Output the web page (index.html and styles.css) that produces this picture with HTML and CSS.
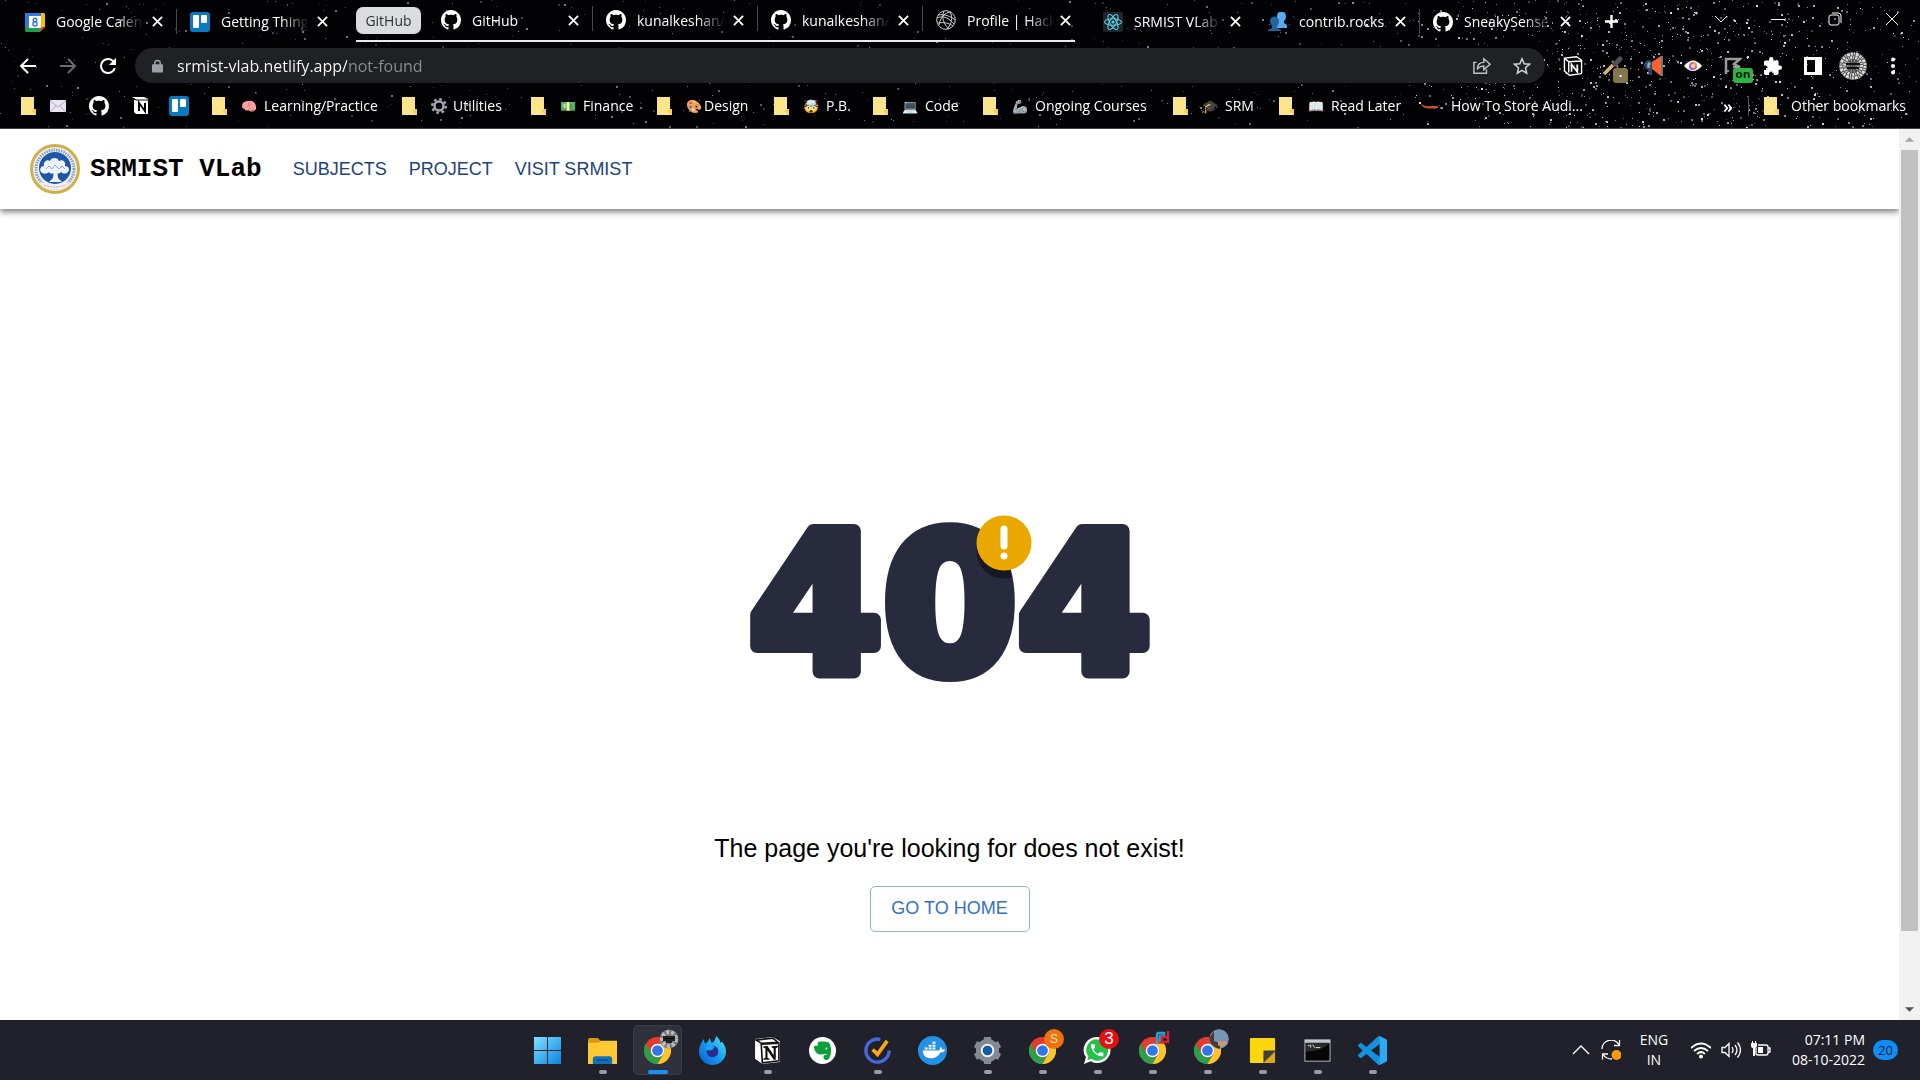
FILE: index.html
```html
<!DOCTYPE html>
<html lang="en">
<head>
<meta charset="utf-8">
<title>SRMIST VLab</title>
<link rel="stylesheet" href="styles.css">
</head>
<body>
<svg class="sprite" aria-hidden="true">
  <symbol id="github" viewBox="0 0 16 16"><path fill="#fff" d="M8 0C3.58 0 0 3.58 0 8c0 3.54 2.29 6.53 5.47 7.59.4.07.55-.17.55-.38 0-.19-.01-.82-.01-1.49-2.01.37-2.53-.49-2.69-.94-.09-.23-.48-.94-.82-1.13-.28-.15-.68-.52-.01-.53.63-.01 1.08.58 1.23.82.72 1.21 1.87.87 2.33.66.07-.52.28-.87.51-1.07-1.78-.2-3.64-.89-3.64-3.95 0-.87.31-1.59.82-2.15-.08-.2-.36-1.02.08-2.12 0 0 .67-.21 2.2.82.64-.18 1.32-.27 2-.27s1.36.09 2 .27c1.53-1.04 2.2-.82 2.2-.82.44 1.1.16 1.92.08 2.12.51.56.82 1.27.82 2.15 0 3.07-1.87 3.75-3.65 3.95.29.25.54.73.54 1.48 0 1.07-.01 1.93-.01 2.2 0 .21.15.46.55.38A8.01 8.01 0 0 0 16 8c0-4.42-3.58-8-8-8z"/></symbol>
  <symbol id="trello" viewBox="0 0 20 20"><rect width="20" height="20" rx="3" fill="#0b79c0"/><rect x="3" y="3" width="6" height="13" rx="1" fill="#fff"/><rect x="11" y="3" width="6" height="8" rx="1" fill="#fff"/></symbol>
  <symbol id="cross" viewBox="0 0 12 12"><path d="M1 1l10 10M11 1L1 11" stroke="#fff" stroke-width="2"/></symbol>
  <symbol id="folder" viewBox="0 0 16 18"><path d="M1 0h13v12h2v6H1z" fill="#fde58c"/><path d="M14 12c-1 0-2 1-2 2s1 2 2 2l2 2v-6z" fill="#f5cf59"/></symbol>
  <symbol id="notion" viewBox="0 0 28 28"><path d="M2 3l17-2 7 4v20l-17 2-7-5z" fill="#fff"/><path d="M3 4l16-2 5 4-16 1zM8 8l17-1v17L9 26z" fill="none" stroke="#15161a" stroke-width="1.6"/><path d="M10 23v-1l2-1V12l-2-1v-1l4-.3 6 9V12l-2-1v-1l6-.5v1L22 12v11h-2l-6-9v7l2 1v1z" fill="#111"/></symbol>
  <symbol id="chrome" viewBox="0 0 48 48"><circle cx="24" cy="24" r="24" fill="#e33b2e"/><path d="M3.2 12L13.6 30A12 12 0 0 0 34.4 30L24 48A24 24 0 0 1 3.2 12z" fill="#2c9f4b"/><path d="M44.8 12A24 24 0 0 1 24 48L34.4 30A12 12 0 0 0 24 12z" fill="#fcc42d"/><circle cx="24" cy="24" r="12" fill="#fff"/><circle cx="24" cy="24" r="9.5" fill="#2f76ea"/></symbol>
</svg>

<header class="browser">
  <canvas class="stars" id="stars"></canvas>

  <div class="tabs">
    <div class="tab"><svg class="fav" viewBox="0 0 20 20"><path d="M0 1h16v4H5v10H0z" fill="#2f7ae5"/><path d="M16 1h3l1 1v13h-4z" fill="#fbbc04"/><path d="M0 15h15v5H1l-1-1z" fill="#1e9e4a"/><path d="M15 15h5l-5 5z" fill="#ea4335"/><rect x="4" y="4" width="12" height="12" fill="#fff"/><circle cx="10" cy="8" r="1.8" fill="none" stroke="#2f6fd8" stroke-width="1.4"/><circle cx="10" cy="12" r="2.1" fill="none" stroke="#2f6fd8" stroke-width="1.4"/></svg><span class="label">Google Calen</span><button class="close" aria-label="Close tab"><svg><use href="#cross"/></svg></button></div>
    <div class="tab sep"><svg class="fav"><use href="#trello"/></svg><span class="label">Getting Thing</span><button class="close" aria-label="Close tab"><svg><use href="#cross"/></svg></button></div>
    <div class="group">
      <button class="chip">GitHub</button>
      <div class="tab"><svg class="fav"><use href="#github"/></svg><span class="label plain">GitHub</span><button class="close" aria-label="Close tab"><svg><use href="#cross"/></svg></button></div>
      <div class="tab sep"><svg class="fav"><use href="#github"/></svg><span class="label">kunalkeshan/</span><button class="close" aria-label="Close tab"><svg><use href="#cross"/></svg></button></div>
      <div class="tab sep"><svg class="fav"><use href="#github"/></svg><span class="label">kunalkeshan/</span><button class="close" aria-label="Close tab"><svg><use href="#cross"/></svg></button></div>
      <div class="tab sep"><svg class="fav" viewBox="0 0 20 20" fill="none" stroke="#ccc" stroke-width="1"><circle cx="10" cy="10" r="9.3"/><path d="M1 8c6-3 12 0 17 6M3 15C4 8 9 2 15 2M8 1c-3 6 0 14 5 18M14 2c3 5 2 12-3 17M2 5c6-1 13 1 17 5M2 13c6-1 11 0 15 3"/></svg><span class="label">Profile | Hack</span><button class="close" aria-label="Close tab"><svg><use href="#cross"/></svg></button></div>
    </div>
    <div class="tab"><svg class="fav" viewBox="0 0 20 20"><rect width="20" height="20" rx="2" fill="#20262c"/><g fill="none" stroke="#61cfe6" stroke-width="1.1"><ellipse cx="10" cy="10" rx="8.5" ry="3.3"/><ellipse cx="10" cy="10" rx="8.5" ry="3.3" transform="rotate(60 10 10)"/><ellipse cx="10" cy="10" rx="8.5" ry="3.3" transform="rotate(120 10 10)"/></g><circle cx="10" cy="10" r="1.6" fill="#61cfe6"/></svg><span class="label">SRMIST VLab</span><button class="close" aria-label="Close tab"><svg><use href="#cross"/></svg></button></div>
    <div class="tab"><svg class="fav" viewBox="0 0 20 20"><path d="M9 4a4.500 4.500 0 0 1 9 0c0 3-1 4-2 5v2l3 2v3H9z" fill="#55acee"/><path d="M2 9a4.500 4.500 0 0 1 9 0c0 3-1 4-2 5v2l4 2v1H0v-1l4-2v-2C3 13 2 11 2 9z" fill="#226699"/></svg><span class="label plain">contrib.rocks</span><button class="close" aria-label="Close tab"><svg><use href="#cross"/></svg></button></div>
    <div class="tab sep"><svg class="fav"><use href="#github"/></svg><span class="label">SneakySense</span><button class="close" aria-label="Close tab"><svg><use href="#cross"/></svg></button></div>
    <button class="new-tab" aria-label="New tab"><svg viewBox="0 0 16 16"><path d="M8 1v14M1 8h14" stroke="#fff" stroke-width="2.500"/></svg></button>
    <div class="window-controls">
      <button aria-label="Search tabs"><svg viewBox="0 0 14 14"><path d="M1 4l6 6 6-6"/></svg></button>
      <button aria-label="Minimise"><svg viewBox="0 0 14 14"><path d="M0 7.500h14"/></svg></button>
      <button aria-label="Restore"><svg viewBox="0 0 14 14"><rect x="1" y="3" width="10" height="10" rx="2"/><path d="M4 1h6a3 3 0 0 1 3 3v7"/></svg></button>
      <button aria-label="Close"><svg viewBox="0 0 14 14"><path d="M1 1l12 12M13 1L1 13"/></svg></button>
    </div>
  </div>

  <div class="toolbar">
    <button aria-label="Back"><svg viewBox="0 0 18 18" fill="none" stroke="#fff" stroke-width="2"><path d="M17 9H2M9 2L2 9l7 7"/></svg></button>
    <button aria-label="Forward"><svg viewBox="0 0 18 18" fill="none" stroke="#6b6b6d" stroke-width="2"><path d="M1 9h15M9 2l7 7-7 7"/></svg></button>
    <button aria-label="Reload"><svg class="large" viewBox="2 2 20 20"><path fill="#fff" d="M17.650 6.350A7.960 7.960 0 0 0 12 4a8 8 0 1 0 7.730 10h-2.080A6 6 0 1 1 12 6c1.660 0 3.140.69 4.220 1.780L13 11h7V4l-2.350 2.350z"/></svg></button>
    <div class="omnibox">
      <svg class="lock" viewBox="0 0 12 14"><rect y="5" width="12" height="9" rx="1" fill="#9aa0a6"/><path d="M3 6V4a3 3 0 0 1 6 0v2" fill="none" stroke="#9aa0a6" stroke-width="1.600"/></svg>
      <input class="url" type="text" aria-label="Address" value="srmist-vlab.netlify.app/not-found">
      <button aria-label="Share"><svg viewBox="0 0 20 18" fill="none" stroke="#bdc1c6" stroke-width="1.600"><path d="M4 5H1v12h14v-4M5 12c0-5 3-7 7-7V1l7 6-7 6V9c-3 0-5 1-7 3z"/></svg></button>
      <button aria-label="Bookmark"><svg viewBox="0 0 20 20" fill="none" stroke="#d0d3d6" stroke-width="1.700"><path d="M10 2l2.400 5.500 6 .5-4.500 4 1.300 6-5.200-3.200L4.800 18l1.300-6-4.500-4 6-.5z"/></svg></button>
    </div>
    <button aria-label="Notion clipper"><svg class="large" viewBox="0 0 28 28" fill="none" stroke="#fff" stroke-width="2"><path d="M2 3l17-2 7 5v17q0 2-2 2L9 27l-7-6zM2 3l6 5v15M8 8l17-1"/><path d="M12 22V12l8 10V12" stroke-width="2.500"/></svg></button>
    <button aria-label="Colour picker"><svg class="large" viewBox="0 0 20 20"><path d="M1 18l9-9" stroke="#d9b27b" stroke-width="3.500"/><path d="M9 5l6 6" stroke="#888" stroke-width="2"/><path d="M12 8l5-5" stroke="#505050" stroke-width="5" stroke-linecap="round"/></svg><span class="badge brown">.</span></button>
    <button aria-label="Announcer"><svg class="large" viewBox="0 0 20 20"><circle cx="6" cy="9" r="5" fill="#29455f"/><path d="M4 10h5v9H6z" fill="#29455f"/><path d="M9 6l9-6v20l-9-7z" fill="#fa6232"/><path d="M19 0v20" stroke="#dfe9ef"/><path d="M5 12V7h2v2H5l2 3" fill="none" stroke="#b0cce0"/></svg></button>
    <button aria-label="Eye"><svg viewBox="0 0 18 18"><path d="M0 9q9-11 18 0-9 10-18 0z" fill="#fff"/><circle cx="9" cy="9" r="4" fill="#e0609a"/><path d="M9 5a4 4 0 0 1 4 4H9z" fill="#f6a02d"/><path d="M9 13a4 4 0 0 1-4-4h4z" fill="#7f63d6"/><circle cx="9" cy="9" r="2" fill="#f7d8a4"/></svg></button>
    <button aria-label="Flag"><svg viewBox="0 0 18 18" fill="none" stroke="#9b9b9b" stroke-width="2.500"><path d="M2 17V2h14l-6 5 6 3H9"/></svg><span class="badge green">on</span></button>
    <button aria-label="Extensions"><svg viewBox="2 1 21 21"><path fill="#fff" d="M20.500 11H19V7c0-1.100-.9-2-2-2h-4V3.500a2.500 2.500 0 0 0-5 0V5H4c-1.100 0-2 .9-2 2v3.800h1.500c1.500 0 2.700 1.200 2.700 2.700S5 16.200 3.500 16.200H2V20c0 1.100.9 2 2 2h3.800v-1.500c0-1.500 1.200-2.700 2.700-2.700s2.700 1.200 2.700 2.700V22H17c1.100 0 2-.9 2-2v-4h1.500a2.500 2.500 0 0 0 0-5z"/></svg></button>
    <button aria-label="Side panel"><svg viewBox="0 0 18 18"><path fill="#fff" fill-rule="evenodd" d="M0 0h18v18H0zM3 3v12h8V3z"/></svg></button>
    <button aria-label="Profile"><svg class="avatar" viewBox="0 0 28 28"><circle cx="14" cy="14" r="14" fill="#4a4a4a"/><g fill="none" stroke="#dcdcdc"><circle cx="14" cy="14" r="12" stroke-width="3" stroke-dasharray="2 1 1 1 3 1"/><circle cx="14" cy="14" r="8.500" stroke-width="3" stroke-dasharray="1 1 2 1"/><circle cx="14" cy="14" r="5" stroke-width="3" stroke-dasharray="1 2" stroke="#999"/></g><path d="M7 12h14M8 16h12" stroke="#111" stroke-width="2"/><path d="M6 14h16" stroke="#999" stroke-dasharray="1 1"/></svg></button>
    <button class="more" aria-label="Menu"><svg viewBox="0 0 18 18" fill="#fff"><circle cx="9" cy="2.500" r="2"/><circle cx="9" cy="9" r="2"/><circle cx="9" cy="15.500" r="2"/></svg></button>
  </div>

  <nav class="bookmarks" aria-label="Bookmarks">
    <a href="#"><svg class="folder"><use href="#folder"/></svg><svg class="mail" viewBox="0 0 16 12"><rect width="16" height="12" rx="1" fill="#e8e4f0"/><path d="M0 1l8 6 8-6M0 12l6-6M16 12l-6-6" fill="none" stroke="#b4a8c8"/></svg></a>
    <a href="#" aria-label="GitHub"><svg class="fav"><use href="#github"/></svg></a>
    <a href="#" aria-label="Notion"><svg class="small" viewBox="0 0 17 19"><path d="M0 1h12l4 2v15H4l-2-2V4h3z" fill="#fff"/><path d="M0 2l4 2h12" fill="none" stroke="#111"/><path d="M7 15V7l6 8V7" fill="none" stroke="#000" stroke-width="2"/></svg></a>
    <a href="#" aria-label="Trello"><svg class="fav"><use href="#trello"/></svg></a>
    <a href="#"><svg class="folder"><use href="#folder"/></svg><span class="emoji">🧠</span><span>Learning/Practice</span></a>
    <a href="#"><svg class="folder"><use href="#folder"/></svg><svg class="gear" viewBox="0 0 16 16" fill="none" stroke="#a9a3b5"><circle cx="8" cy="8" r="4.500" stroke-width="2.500"/><circle cx="8" cy="8" r="6.800" stroke-width="2.400" stroke-dasharray="2.670 2.670"/></svg><span>Utilities</span></a>
    <a href="#"><svg class="folder"><use href="#folder"/></svg><span class="emoji">💵</span><span>Finance</span></a>
    <a href="#" class="tight"><svg class="folder"><use href="#folder"/></svg><span class="emoji">🎨</span><span>Design</span></a>
    <a href="#"><svg class="folder"><use href="#folder"/></svg><span class="emoji">🤯</span><span>P.B.</span></a>
    <a href="#"><svg class="folder"><use href="#folder"/></svg><span class="emoji">💻</span><span>Code</span></a>
    <a href="#"><svg class="folder"><use href="#folder"/></svg><span class="emoji">🦾</span><span>Ongoing Courses</span></a>
    <a href="#"><svg class="folder"><use href="#folder"/></svg><span class="emoji">🎓</span><span>SRM</span></a>
    <a href="#"><svg class="folder"><use href="#folder"/></svg><span class="emoji">📖</span><span>Read Later</span></a>
    <a href="#" class="article"><svg viewBox="0 0 18 6"><path d="M0 1q5 3 9 2h8v2q-8 1-12 0Q1 4 0 1z" fill="#c6502a"/></svg><span>How To Store Audi...</span></a>
    <button class="overflow" aria-label="More bookmarks">»</button>
    <a href="#" class="other"><svg class="folder"><use href="#folder"/></svg><span>Other bookmarks</span></a>
  </nav>
</header>

<div class="viewport">
  <div class="page">
    <nav class="site-nav" aria-label="Site">
      <a class="brand" href="#">
        <svg viewBox="0 0 50 50"><circle cx="25" cy="25" r="23.500" fill="#eef1f6" stroke="#cfb048" stroke-width="3"/><circle cx="25" cy="25" r="19" fill="none" stroke="#8e9fc4" stroke-width="3" stroke-dasharray="1.500 1"/><circle cx="25" cy="24" r="16" fill="#1c56a8"/><path d="M24 24h3l1 10 4 4H19l4-4z" fill="#eef3fa"/><path d="M11 28c-2-3 0-6 3-6-1-4 3-7 6-5 1-4 8-4 9 0 4-2 7 1 6 5 4 0 5 4 3 6-3 3-6 1-7 0-2 2-5 2-6 0-2 2-5 2-6 0-2 2-6 2-8 0z" fill="#eef3fa"/><path d="M16 25l3-3 3 3 3-4 4 4 3-3 3 3" fill="none" stroke="#8aa9d6"/><path d="M10 38q15 4 30 0l-4 5q-11 5-22 0z" fill="#eef1f6"/><path d="M14 41q11 4 22 0" fill="none" stroke="#d9a0a8" stroke-dasharray="2 1"/></svg>
        <span>SRMIST VLab</span>
      </a>
      <ul class="links">
        <li><a href="#">SUBJECTS</a></li>
        <li><a href="#">PROJECT</a></li>
        <li><a href="#">VISIT SRMIST</a></li>
      </ul>
    </nav>
    <main class="not-found">
      <svg class="code" viewBox="0 0 420 176">
        <clipPath id="zero"><ellipse cx="210" cy="88" rx="65" ry="80"/></clipPath>
        <text class="digits" x="210" y="158">404</text>
        <circle cx="264" cy="37" r="27.500" fill="#161824" clip-path="url(#zero)"/>
        <circle cx="264" cy="29" r="27.500" fill="#eaa800"/>
        <path d="M264 15v17" stroke="#fff" stroke-width="7" stroke-linecap="round"/>
        <circle cx="264" cy="42" r="3.500" fill="#fff"/>
      </svg>
      <h1>The page you're looking for does not exist!</h1>
      <button class="home">GO TO HOME</button>
    </main>
  </div>
  <div class="scrollbar">
    <svg viewBox="0 0 10 5"><path d="M0 5l5-5 5 5z" fill="#a3a3a3"/></svg>
    <div class="track"><div class="thumb"></div></div>
    <svg viewBox="0 0 10 5"><path d="M0 0l5 5 5-5z" fill="#505050"/></svg>
  </div>
</div>

<footer class="taskbar">
  <div class="apps">
    <button aria-label="Start"><svg viewBox="0 0 30 30"><defs><linearGradient id="win" x2="1" y2="1"><stop stop-color="#7fe0ff"/><stop offset="1" stop-color="#0a84e0"/></linearGradient></defs><path d="M1 1h13.500v13.500H1zM15.500 1H29v13.500H15.500zM1 15.500h13.500V29H1zM15.500 15.500H29V29H15.500z" fill="url(#win)"/></svg></button>
    <button class="open" aria-label="File Explorer"><svg viewBox="0 0 30 30"><path d="M0 4q0-2 2-2h8l3 3-2 4H0z" fill="#d9980f"/><path d="M0 7h11l2-2h17v24H0z" fill="#fcc934"/><path d="M5 29v-5q0-3 3-3h14q3 0 3 3v5z" fill="#1272b8"/><path d="M9 25h12" stroke="#0a4c82" stroke-width="1.500"/></svg></button>
    <button class="open active" aria-label="Chrome"><svg viewBox="0 0 30 30"><use href="#chrome" x="1" y="1" width="28" height="28"/></svg><svg class="mark" viewBox="0 0 20 20"><circle cx="10" cy="10" r="9.500" fill="#777"/><circle cx="10" cy="10" r="7" fill="none" stroke="#bbb" stroke-width="4" stroke-dasharray="3 2"/><path d="M5 8h10v3H5zM7 13h6" stroke="#222" stroke-width="2"/></svg></button>
    <button aria-label="Firefox"><svg viewBox="0 0 30 30"><defs><linearGradient id="fox" x1="1" x2="0" y2="1"><stop stop-color="#52e4f5"/><stop offset=".5" stop-color="#169bf0"/><stop offset="1" stop-color="#0757d2"/></linearGradient></defs><path d="M1 16C1 11 3 7 6 3l1 5 3-2 2-4 2 5c3 0 4-5 5-7 3 3 4 5 4 7l2-1c3 4 4 7 4 10a14 14 0 0 1-28 0z" fill="url(#fox)"/><circle cx="15" cy="16" r="6" fill="#2a2a8c"/><path d="M8 14q6 3 9-2-2-4-7-3z" fill="#1ca2ef"/></svg></button>
    <button class="open" aria-label="Notion"><svg><use href="#notion"/></svg></button>
    <button aria-label="Evernote"><svg viewBox="0 0 30 30"><circle cx="15" cy="15" r="14" fill="#fff"/><path d="M6 11l5-5c5-1 9 0 11 1 3 6 2 12 0 16-2 3-6 2-6-1s3-3 4-2c0 0-1-2-4-1-7 1-9-3-10-8zM7 10h3V7z" fill="#0ba037"/><circle cx="19" cy="13" r="1" fill="#fff"/></svg></button>
    <button class="open" aria-label="TickTick"><svg viewBox="0 0 30 30" fill="none"><path d="M18 3.500A12 12 0 1 0 27 15" stroke="#4767e0" stroke-width="3.500"/><path d="M10 14l5 5L25 5" stroke="#fba91a" stroke-width="3.800"/></svg></button>
    <button aria-label="Docker"><svg viewBox="0 0 30 30"><circle cx="15" cy="15" r="15" fill="#2391e6"/><path d="M5 15h17q1-4 2-4l1 3h3c-1 3-3 3-5 3-2 4-5 6-10 6-6 0-8-4-8-8zM7 12h3v2H7zM11 12h3v2h-3zM15 12h3v2h-3zM11 9h3v2h-3zM15 9h3v2h-3zM15 6h3v2h-3z" fill="#fff"/></svg></button>
    <button class="open" aria-label="Settings"><svg viewBox="0 0 30 30" fill="none"><circle cx="15" cy="15" r="8.500" stroke="#848a92" stroke-width="7"/><path d="M11.500 1h7l1 6h-9zM11.500 29h7l1-6h-9zM1 11.500l3-6 6 2-3 8zM29 11.500l-3-6-6 2 3 8zM1 18.500l3 6 6-2-3-8zM29 18.500l-3 6-6-2 3-8z" fill="#848a92"/><circle cx="15" cy="15" r="6" fill="#135ba5" stroke="#f2f5f8" stroke-width="2"/></svg></button>
    <button class="open" aria-label="Chrome, profile S"><svg viewBox="0 0 30 30"><use href="#chrome" x="1" y="1" width="28" height="28"/></svg><span class="mark orange">S</span></button>
    <button class="open" aria-label="WhatsApp"><svg viewBox="0 0 30 30"><path d="M15 1a13.500 13.500 0 0 1 0 27q-4 0-7-2l-7 3 2-7A13.500 13.500 0 0 1 15 1z" fill="#fff"/><path d="M15 3.500a11 11 0 0 1 0 22q-4 0-6.500-2L4.500 25l1-4A11 11 0 0 1 15 3.500z" fill="#27c04a"/><path transform="translate(6 6) scale(.72)" fill="#fff" d="M6.620 10.790c1.440 2.830 3.760 5.140 6.590 6.590l2.200-2.200c.27-.27.67-.36 1.020-.24 1.120.37 2.330.57 3.570.57.55 0 1 .45 1 1V20c0 .55-.45 1-1 1-9.390 0-17-7.610-17-17 0-.55.45-1 1-1h3.500c.55 0 1 .45 1 1 0 1.250.2 2.450.57 3.570.11.35.03.74-.25 1.020l-2.200 2.200z"/></svg><span class="mark red">3</span></button>
    <button class="open" aria-label="Chrome, profile rd"><svg viewBox="0 0 30 30"><use href="#chrome" x="1" y="1" width="28" height="28"/></svg><svg class="mark" viewBox="0 0 20 20" fill="none" stroke-width="2.500"><path d="M3 15V4h7v3H6v5" stroke="#2a9fd0"/><path d="M14 2v11H8V8h5" stroke="#cf2436"/></svg></button>
    <button class="open" aria-label="Chrome, profile photo"><svg viewBox="0 0 30 30"><use href="#chrome" x="1" y="1" width="28" height="28"/></svg><svg class="mark" viewBox="0 0 20 20"><circle cx="10" cy="10" r="10" fill="#7896b4"/><path d="M0 9l5-7v10l6 2v6Q1 18 0 9z" fill="#4a3c38"/><path d="M9 12h8l1 3-5 3-4-2z" fill="#c99a78"/></svg></button>
    <button class="open" aria-label="Sticky Notes"><svg viewBox="0 0 30 30"><path d="M2 3q0-1 1-1h24q1 0 1 1v13L16 28H3q-1 0-1-1z" fill="#fcd60c"/><path d="M16 15h12v1L16 28z" fill="#3e3e40"/><path d="M28 16v11q0 1-1 1H16z" fill="#e0a818"/></svg></button>
    <button class="open" aria-label="Terminal"><svg viewBox="0 0 30 30"><rect x="2" y="4" width="26" height="22" fill="#060606" stroke="#b9bcc0"/><path d="M2 4h26v3H2z" fill="#c5c8cc"/><path d="M5 10h2M8 9v3M10 9l2 3M13 12h5" stroke="#ddd"/><path d="M3 16q15 0 24-8v-1H3z" fill="#fff" opacity=".15"/></svg></button>
    <button class="open" aria-label="Visual Studio Code"><svg viewBox="0 0 24 24"><path fill="#1590dc" d="M23.150 2.587L18.210.21a1.494 1.494 0 0 0-1.705.29l-9.460 8.630-4.120-3.128a.999.999 0 0 0-1.276.057L.327 7.261A1 1 0 0 0 .326 8.740L3.899 12 .326 15.260a1 1 0 0 0 .001 1.479L1.650 17.940a.999.999 0 0 0 1.276.057l4.120-3.128 9.460 8.630a1.492 1.492 0 0 0 1.704.29l4.942-2.377A1.500 1.500 0 0 0 24 20.060V3.939a1.500 1.500 0 0 0-.85-1.352zm-5.146 14.861L10.826 12l7.178-5.448v10.896z"/><path fill="#2fa8f3" d="M18 .2l5.200 2.400q.8.500.8 1.300v16.200q0 .8-.8 1.300L18 23.800z"/></svg></button>
  </div>
  <div class="tray">
    <button aria-label="Hidden icons"><svg viewBox="0 0 20 20"><path d="M2 14l8-8 8 8"/></svg></button>
    <button aria-label="Updates"><svg viewBox="0 0 20 20"><path d="M1 9a9 9 0 0 1 17-4M18.500 0v5.500H13M11 19q-6 0-9-4.500M1.500 19.500V14H7"/><circle cx="15.500" cy="15" r="5" fill="#fb9a0c" stroke="none"/></svg></button>
    <button class="lang"><span>ENG</span><span>IN</span></button>
    <button aria-label="Network"><svg viewBox="0 0 20 20"><path d="M0 8q10-9 20 0M3 11q7-6 14 0M6 14q4-4 8 0" stroke-width="1.700"/><circle cx="10" cy="16.500" r="2" fill="#fff" stroke="none"/></svg></button>
    <button aria-label="Volume"><svg viewBox="0 0 20 20"><path d="M1 7.500h3l4-4v13l-4-4H1zM11 7q2 3 0 6M14 5q4 5 0 10M16.500 2.500q6 7.500 0 15"/></svg></button>
    <button aria-label="Battery"><svg viewBox="0 0 20 20"><path d="M7 5h8q2 0 2 2v6q0 2-2 2H7q-2 0-2-2V8M17 8h2v4h-2"/><path d="M7 7h5v6H7zM0 3h6v3q0 2-2 2v8H2V8Q0 8 0 6zM1 1h1v3H1zM4 1h1v3H4z" fill="#fff" stroke="none"/></svg></button>
    <button class="clock"><time>07:11 PM</time><time>08-10-2022</time></button>
    <span class="count">20</span>
  </div>
</footer>
<script src="stars.js"></script>
</body>
</html>
```
FILE: styles.css
```css
* { box-sizing: border-box; }

body {
  margin: 0;
  height: 100vh;
  display: flex;
  flex-direction: column;
  background: #fff;
  font-family: "Open Sans", sans-serif;
  font-size: 14px;
  overflow: hidden;
}

button {
  border: 0;
  padding: 0;
  background: none;
  color: inherit;
  font: inherit;
}

a { color: inherit; text-decoration: none; }
svg { display: block; flex: none; }
.sprite { position: absolute; width: 0; height: 0; }
.fav { width: 20px; height: 20px; }
.small { width: 17px; height: 19px; }

/* Browser frame */
.browser {
  position: relative;
  isolation: isolate;
  flex: none;
  background: #020205;
  color: #fff;
  border-bottom: 1px solid #444;
}
.stars {
  position: absolute;
  inset: 0;
  z-index: -1;
  width: 100%;
  height: 100%;
}

.tabs { display: flex; height: 43px; padding-left: 11px; }
.tab {
  display: flex;
  align-items: center;
  width: 165px;
  padding-left: 14px;
  flex: none;
  position: relative;
}
.sep::before {
  content: "";
  position: absolute;
  left: 0;
  top: 9px;
  width: 1px;
  height: 25px;
  background: #4a4a4d;
}
.group .sep::before { top: -4px; }
.label {
  flex: none;
  width: 88px;
  margin-left: 11px;
  white-space: nowrap;
  overflow: hidden;
  mask-image: linear-gradient(to right, #000 60px, transparent 88px);
}
.label.plain { mask-image: none; }
.close { width: 26px; height: 20px; display: grid; place-items: center; }
.close svg { width: 11px; height: 11px; }
.group {
  display: flex;
  align-items: center;
  margin-left: 15px;
  margin-right: 14px;
  border-bottom: 2px solid #e8eaed;
  height: 42px;
}
.group .tab:last-child { width: 153px; }
.chip {
  width: 65px;
  height: 27px;
  margin-right: 6px;
  border-radius: 7px;
  background: #dadce0;
  color: #303236;
}
.new-tab { width: 54px; display: grid; place-items: center; }
.new-tab svg { width: 15px; height: 15px; }
.window-controls { display: flex; margin-left: auto; height: 37px; }
.window-controls button { width: 57px; display: grid; place-items: center; }
.window-controls svg { width: 14px; height: 14px; fill: none; stroke: #fff; }

.toolbar { display: flex; align-items: center; height: 45px; padding: 0 7px 0 8px; }
.toolbar button {
  position: relative;
  width: 40px;
  height: 35px;
  display: grid;
  place-items: center;
}
.toolbar svg { width: 18px; height: 18px; }
.toolbar svg.large { width: 20px; height: 20px; }
.toolbar svg.avatar { width: 28px; height: 28px; }
.omnibox {
  flex: 1;
  display: flex;
  align-items: center;
  height: 35px;
  margin: 0 8px 0 7px;
  padding: 0 3px 0 17px;
  border-radius: 18px;
  background: #202124;
}
.toolbar .lock { width: 11px; height: 14px; }
.url {
  flex: 1;
  min-width: 0;
  margin: 0 0 0 14px;
  padding: 0;
  border: 0;
  outline: 0;
  font: 16px/24px "Open Sans", sans-serif;
  color: transparent;
  background: linear-gradient(to right, #fff 170px, #8b8e92 170px);
  background-clip: text;
}
.badge {
  position: absolute;
  left: 20px;
  bottom: 0;
  height: 15px;
  border-radius: 3px;
  font: bold 11px/14px "DejaVu Sans", sans-serif;
}
.brown { width: 15px; background: #85754f; line-height: 12px; }
.green { width: 20px; background: #2eb344; color: #10220f; }

.bookmarks {
  display: grid;
  grid-template-columns: 69px 43px 37px 42px 190px 129px 126px 117px 99px 110px 190px 106px 143px 1fr 40px 172px;
  height: 40px;
  padding: 0 0 5px 20px;
}
.bookmarks a { display: flex; align-items: center; white-space: nowrap; }
.bookmarks .folder { width: 16px; height: 18px; margin-right: 14px; }
.bookmarks .emoji { width: 16px; margin-right: 7px; font-size: 13px; }
.bookmarks .tight .emoji { margin-right: 2px; }
.mail { width: 16px; height: 12px; }
.gear { width: 16px; height: 16px; margin-right: 6px; }
.article svg { width: 18px; height: 6px; margin-right: 12px; }
.overflow { font-size: 18px; font-weight: 600; }
.bookmarks .other { position: relative; padding-left: 15px; }
.other::before {
  content: "";
  position: absolute;
  left: 0;
  width: 1px;
  height: 20px;
  background: #555;
}
.other .folder { margin-right: 12px; }

/* Page */
.viewport { flex: 1; min-height: 0; display: flex; }
.page {
  flex: 1;
  min-width: 0;
  overflow: hidden;
  font-family: "Liberation Sans", Arial, sans-serif;
}
.site-nav {
  display: flex;
  align-items: center;
  height: 80px;
  padding-left: 30px;
  box-shadow: 0 3px 6px rgba(0, 0, 0, .5);
}
.brand { display: flex; align-items: center; gap: 10px; color: #000; }
.brand svg { width: 50px; height: 50px; }
.brand span { font: bold 26px/32px "Liberation Mono", "Courier New", monospace; }
.links {
  display: flex;
  gap: 22px;
  margin: 0 0 0 31px;
  padding: 0;
  list-style: none;
  font-size: 18px;
  color: #1d427c;
}

.not-found { display: flex; flex-direction: column; align-items: center; }
.code { width: 420px; height: 176px; margin-top: 305px; }
.digits {
  font: bold 193px "DejaVu Sans", sans-serif;
  text-anchor: middle;
  fill: #282a3e;
  stroke: #282a3e;
  stroke-width: 14px;
  stroke-linejoin: round;
}
.not-found h1 {
  margin: 142px 0 22px;
  font-size: 25px;
  font-weight: 400;
  line-height: 32px;
  color: #000;
}
.home {
  width: 160px;
  height: 46px;
  padding-bottom: 2px;
  border: 1px solid #8fb4da;
  border-radius: 5px;
  font-size: 18px;
  color: #3470c6;
}

.scrollbar {
  width: 21px;
  display: flex;
  flex-direction: column;
  align-items: center;
  justify-content: space-between;
  padding: 8px 0;
  background: #f1f1f1;
}
.scrollbar svg { width: 9px; height: 5px; }
.track { width: 17px; flex: 1; margin: 8px 0; }
.thumb { height: 92%; background: #c1c1c1; }

/* Taskbar */
.taskbar {
  flex: none;
  display: grid;
  grid-template-columns: 1fr auto 1fr;
  height: 60px;
  background: #20212a;
  color: #fff;
}
.apps { grid-column: 2; display: flex; align-items: center; }
.apps button {
  position: relative;
  width: 49px;
  height: 50px;
  margin: 0 3px;
  display: grid;
  place-items: center;
  border-radius: 5px;
}
.apps svg { width: 29px; height: 29px; }
.apps .active { background: #30323b; box-shadow: inset 0 0 0 1px #3b3d46; }
.apps .open::after {
  content: "";
  position: absolute;
  bottom: 1px;
  width: 8px;
  height: 4px;
  border-radius: 2px;
  background: #9b9ca2;
}
.apps .active::after { width: 20px; background: #1890f8; }
.apps .mark {
  position: absolute;
  left: 26px;
  top: 4px;
  width: 20px;
  height: 20px;
  border-radius: 50%;
}
.orange { background: #ee730e; color: #ffe0c0; font: 12px/20px "Liberation Sans", sans-serif; }
.red { background: #e80f12; font: 17px/20px "Liberation Sans", sans-serif; }

.tray {
  display: flex;
  align-items: center;
  justify-content: flex-end;
  padding-right: 22px;
}
.tray button { width: 30px; display: grid; place-items: center; }
.tray svg { width: 20px; height: 20px; fill: none; stroke: #fff; stroke-width: 1.3; }
.tray .lang { width: 56px; margin-right: 4px; line-height: 20px; }
.tray .clock { width: auto; margin: 0 8px 0 16px; justify-items: end; line-height: 20px; }
.count {
  width: 25px;
  height: 20px;
  border-radius: 10px;
  background: #0f8df5;
  color: #10233a;
  font-size: 13px;
  line-height: 20px;
  text-align: center;
}
```
FILE: stars.js
```js
// Paints the star field of the browser theme, densest near the window controls.
const canvas = document.getElementById('stars');
const width = canvas.width = canvas.clientWidth;
const height = canvas.height = canvas.clientHeight;
const ctx = canvas.getContext('2d');
let seed = 71;
const random = () => (seed = (seed * 16807) % 2147483647) / 2147483647;

function star(x, y, dim) {
  const light = dim * (0.3 + random() * 0.7);
  const size = random() > 0.7 ? 2 : 1;
  ctx.fillStyle = `rgba(215, 225, 255, ${light})`;
  ctx.fillRect(Math.round(x), Math.round(y), size, size);
}

for (let i = 0; i < 800; i++) star(random() * width, random() * height, 0.6);
for (let i = 0; i < 750; i++) {
  const spread = random() + random() + random() - 1.5;
  star(width * 0.87 + spread * 260, random() * height, 1);
}
```
